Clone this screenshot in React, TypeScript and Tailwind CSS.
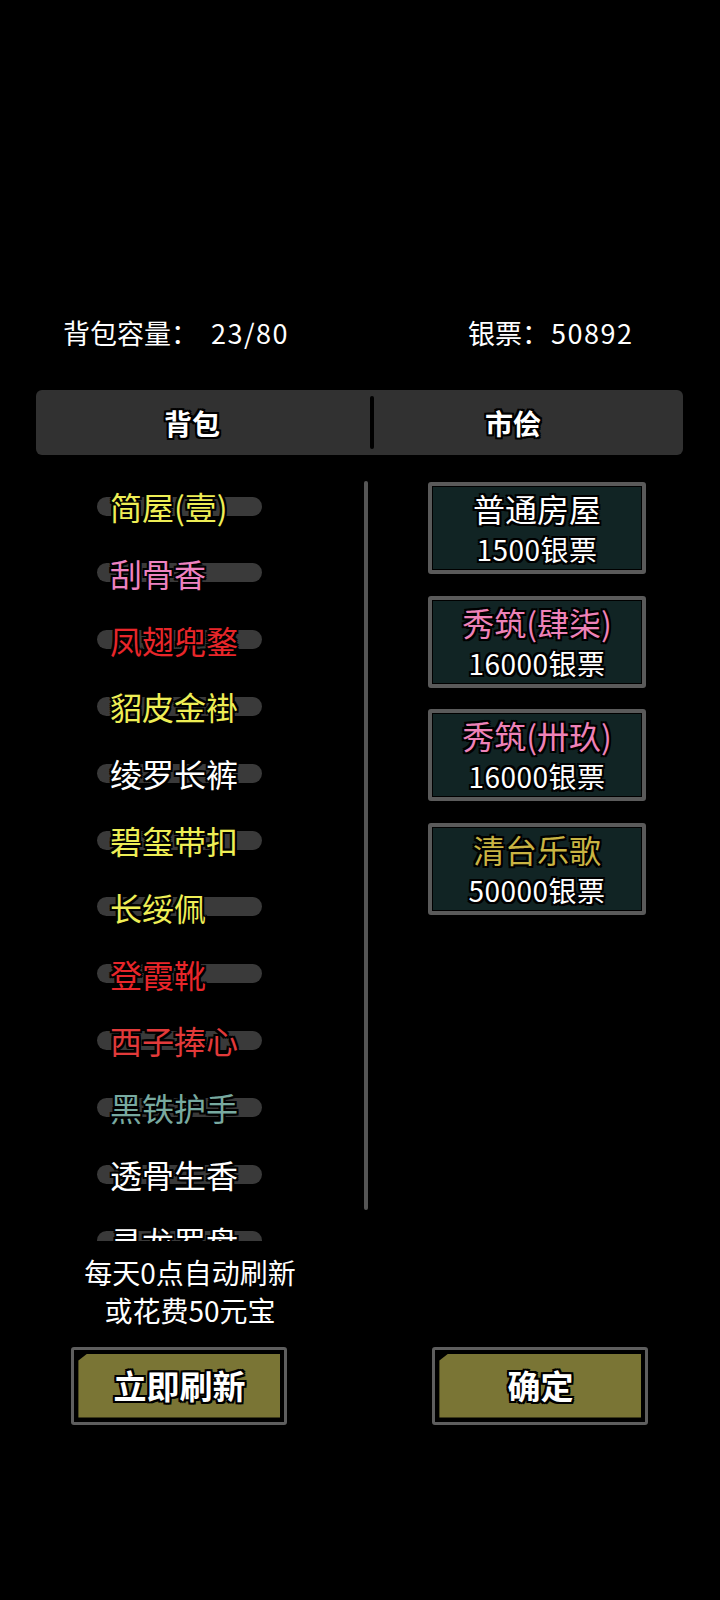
const outline =
  "[text-shadow:-2px_-2px_0_#000,2px_-2px_0_#000,-2px_2px_0_#000,2px_2px_0_#000,0_2px_0_#000,0_-2px_0_#000,2px_0_0_#000,-2px_0_0_#000]";

const bagItems = [
  { name: "简屋(壹)", color: "text-[#eeee55]" },
  { name: "刮骨香", color: "text-[#ee82c0]" },
  { name: "凤翅兜鍪", color: "text-[#e8262a]" },
  { name: "貂皮金褂", color: "text-[#eeee55]" },
  { name: "绫罗长裤", color: "text-white" },
  { name: "碧玺带扣", color: "text-[#eeee55]" },
  { name: "长绥佩", color: "text-[#eeee55]" },
  { name: "登霞靴", color: "text-[#e8262a]" },
  { name: "西子捧心", color: "text-[#e23a3a]" },
  { name: "黑铁护手", color: "text-[#78aaa0]" },
  { name: "透骨生香", color: "text-white" },
  { name: "寻龙罗盘", color: "text-white" },
];

const shopItems = [
  { name: "普通房屋", price: "1500银票", color: "text-white" },
  { name: "秀筑(肆柒)", price: "16000银票", color: "text-[#ee82b8]" },
  { name: "秀筑(卅玖)", price: "16000银票", color: "text-[#ee82b8]" },
  { name: "清台乐歌", price: "50000银票", color: "text-[#c9b443]" },
];

function ActionButton({ label }: { label: string }) {
  return (
    <div className="w-[216px] h-[78px] rounded-[3px] border-[3px] border-[#5e5e5e] bg-black p-[4px]">
      <div className="h-full w-full bg-[#7a7535] [clip-path:polygon(9px_0,100%_0,100%_100%,0_100%,0_7px)] flex items-center justify-center">
        <span className={`text-[33px] leading-none text-white font-bold ${outline}`}>
          {label}
        </span>
      </div>
    </div>
  );
}

export default function App() {
  return (
    <div className="w-[720px] h-[1600px] bg-black text-white font-['Noto_Sans_CJK_SC','Noto_Sans',sans-serif] overflow-hidden">
      {/* header */}
      <div className="flex pt-[314.5px] text-[27px] leading-[36px]">
        <div className="w-[468px] pl-[63px]">
          背包容量：<span className="ml-[13px] tracking-[1.5px]">23/80</span>
        </div>
        <div>
          银票：<span className="ml-[2px] tracking-[1.5px]">50892</span>
        </div>
      </div>

      {/* tabs */}
      <div className="mt-[39.5px] ml-[36px] w-[647px] h-[65px] rounded-[6px] bg-[#313131] flex items-center">
        <div className={`w-[334px] flex justify-center pr-[22px] text-[28px] font-bold ${outline}`}>
          背包
        </div>
        <div className="w-[4px] h-[53px] rounded-full bg-black" />
        <div className={`flex-1 flex justify-center pr-[31px] text-[28px] font-bold ${outline}`}>
          市侩
        </div>
      </div>

      {/* content */}
      <div className="flex mt-[17.6px]">
        <div className="w-[364px] h-[768px] overflow-hidden">
          {bagItems.map((item) => (
            <div key={item.name} className="relative h-[66.8px] flex items-center">
              <div className="absolute left-[97px] top-[24px] w-[165px] h-[19px] rounded-full bg-[#3a3a3a]" />
              <span
                className={`relative pl-[110px] text-[32px] leading-none ${item.color} ${outline}`}
              >
                {item.name}
              </span>
            </div>
          ))}
        </div>
        <div className="w-[4px] h-[729px] mt-[8.4px] rounded-full bg-[#555]" />
        <div className="pl-[60px] pt-[9.4px] flex flex-col gap-[21.7px]">
          {shopItems.map((item) => (
            <div
              key={item.name}
              className="w-[218px] h-[92px] rounded-[3px] border-[4px] border-[#5a5a5a] bg-[#112424] ring-1 ring-inset ring-black flex flex-col items-center pt-[3px]"
            >
              <span className={`text-[32px] leading-[38px] ${item.color} ${outline}`}>
                {item.name}
              </span>
              <span className={`mt-[4px] text-[28px] leading-[36px] tracking-[0.5px] text-white ${outline}`}>
                {item.price}
              </span>
            </div>
          ))}
        </div>
      </div>

      {/* refresh note */}
      <div className="mt-[12px] w-[380px] text-center text-[28px] leading-[38px]">
        <div>每天0点自动刷新</div>
        <div>或花费50元宝</div>
      </div>

      {/* buttons */}
      <div className="mt-[18px] flex pl-[71.4px] gap-[145px]">
        <ActionButton label="立即刷新" />
        <ActionButton label="确定" />
      </div>
    </div>
  );
}
